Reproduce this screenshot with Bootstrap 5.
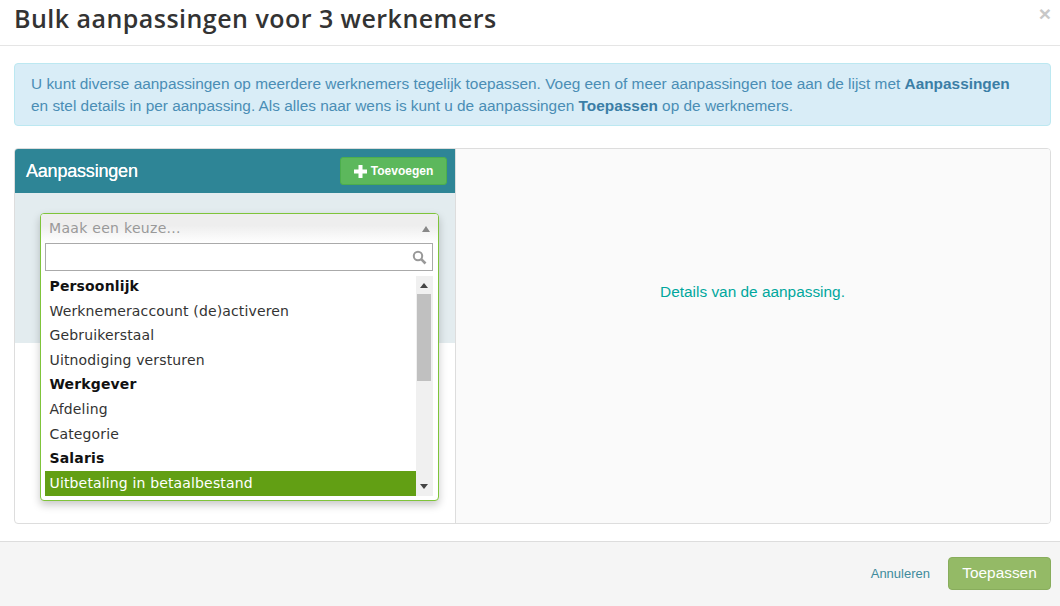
<!DOCTYPE html>
<html lang="en">
<head>
  <meta charset="UTF-8" />
  <title>Bulk aanpassingen</title>
  <link href="https://cdn.jsdelivr.net/npm/bootstrap@5.3.3/dist/css/bootstrap.min.css" rel="stylesheet" />
  <style>
    html, body { height: 100%; overflow: hidden; }
    body { font-family: "Liberation Sans", Arial, sans-serif; font-size: 14px; color: #333; background: #fff; }
    .dlg-head { height: 46px; border-bottom: 1px solid #e5e5e5; padding: 0 9px 0 14px; }
    .dlg-title { font-family: "Open Sans", sans-serif; font-weight: 600; font-size: 25px; letter-spacing: .47px; line-height: 37px; color: #333; margin: 0; }
    .dlg-close { font-family: "Liberation Sans", sans-serif; font-weight: 700; font-size: 21px; line-height: 1; color: #c8c8c8; margin-top: 3px; }
    .dlg-body { padding: 17px 9px 0 14px; height: 495px; }
    .info-box { background: #d9edf7; border: 1px solid #bce8f1; border-radius: 4px; color: #4a8db5; padding: 9px 16px; font-size: 15.4px; line-height: 22px; height: 63px; margin-bottom: 22px; }
    .info-box b { color: #3b7ea6; }
    .edit-panel { border: 1px solid #ddd; border-radius: 4px; height: 376px; overflow: visible; }
    .left-side { width: 441px; position: relative; border-right: 1px solid #ddd; flex: none; }
    .left-head { background: #2e8596; height: 44px; padding: 0 8px 0 11px; border-radius: 3px 0 0 0; }
    .left-title { color: #fff; font-size: 18px; letter-spacing: -.2px; text-shadow: 0 0 .6px #fff; }
    .add-btn { background: #5cb85c; border: 1px solid #4cae4c; border-radius: 3px; color: #fff; font-size: 12px; font-weight: 700; height: 28px; width: 107px; padding: 0; }
    .left-tint { background: #e3ecef; height: 150px; }
    .right-side { background: #fafafa; color: #00a79d; font-size: 15.4px; padding-top: 131px; padding-right: 1px; border-radius: 0 3px 3px 0; }
    .pick-box { position: absolute; left: 25px; top: 64px; width: 399px; height: 288px; background: #fff; border: 1px solid #7fc43a; border-radius: 4px; box-shadow: 0 4px 8px rgba(0,0,0,.22); font-family: "DejaVu Sans", Verdana, sans-serif; font-size: 14px; padding: 0 5px 0 4px; z-index: 5; }
    .pick-top { height: 29px; margin: 0 -5px 0 -4px; padding: 0 8px 0 8px; border-radius: 3px 3px 0 0; background: linear-gradient(#eee 40%, #fff); color: #999; }
    .pick-top span:first-child { letter-spacing: .3px; }
    .pick-arrow { width: 0; height: 0; border-left: 4px solid transparent; border-right: 4px solid transparent; border-bottom: 6px solid #888; }
    .pick-search { height: 28px; border: 1px solid #aaa; padding-right: 5px; }
    .pick-scroll { height: 220px; margin-top: 5px; overflow: hidden; }
    .pick-list { list-style: none; margin: -2px 0 0; padding: 0; flex: 1; }
    .pick-list li { height: 24.6px; line-height: 24.6px; padding-left: 4.5px; color: #333; letter-spacing: .15px; }
    .pick-list li.grp { font-weight: 700; color: #111; }
    .pick-list li.sel { background: #629f14; color: #fff; height: 25px; }
    .fake-bar { width: 17px; background: #f0f0f0; position: relative; flex: none; }
    .bar-thumb { position: absolute; left: 1px; right: 2px; top: 18px; height: 87px; background: #c0c0c0; }
    .bar-up, .bar-down { position: absolute; left: 4px; width: 0; height: 0; border-left: 4px solid transparent; border-right: 4px solid transparent; }
    .bar-up { top: 7px; border-bottom: 5px solid #444; }
    .bar-down { bottom: 7px; border-top: 5px solid #444; }
    .dlg-foot { background: #f5f5f5; border-top: 1px solid #ddd; height: 65px; padding: 15px 9px 0 0; }
    .cancel-link { color: #3f8b9c; font-size: 13px; text-decoration: none; margin: 7px 18px 0 0; }
    .apply-btn { background: #94ba66; border: 1px solid #88ad5c; border-radius: 4px; color: #fff; font-size: 15.4px; width: 103px; height: 33px; padding: 0 0 2px; }
  </style>
</head>
<body>
  <div class="dlg-head d-flex justify-content-between">
    <h4 class="dlg-title">Bulk aanpassingen voor 3 werknemers</h4>
    <span class="dlg-close">×</span>
  </div>
  <div class="dlg-body">
    <div class="info-box">
      U kunt diverse aanpassingen op meerdere werknemers tegelijk toepassen. Voeg een of meer aanpassingen toe aan de lijst met <b>Aanpassingen</b><br>
      en stel details in per aanpassing. Als alles naar wens is kunt u de aanpassingen <b>Toepassen</b> op de werknemers.
    </div>
    <div class="edit-panel d-flex">
      <div class="left-side">
        <div class="left-head d-flex justify-content-between align-items-center">
          <span class="left-title">Aanpassingen</span>
          <button class="add-btn d-flex align-items-center justify-content-center gap-1" type="button">
            <svg width="13" height="13" viewBox="0 0 13 13"><path d="M4.5 0h4v4.5H13v4H8.5V13h-4V8.5H0v-4h4.5z" fill="#fff"/></svg>
            Toevoegen
          </button>
        </div>
        <div class="left-tint"></div>
        <div class="pick-box">
          <div class="pick-top d-flex justify-content-between align-items-center">
            <span>Maak een keuze...</span>
            <span class="pick-arrow"></span>
          </div>
          <div class="pick-search d-flex justify-content-end align-items-center">
            <svg width="15" height="15" viewBox="0 0 15 15"><circle cx="6" cy="6" r="4.2" fill="none" stroke="#999" stroke-width="2"/><path d="M9.2 9.2 13.5 13.5" stroke="#999" stroke-width="2.6"/></svg>
          </div>
          <div class="pick-scroll d-flex">
            <ul class="pick-list">
              <li class="grp">Persoonlijk</li>
              <li>Werknemeraccount (de)activeren</li>
              <li>Gebruikerstaal</li>
              <li>Uitnodiging versturen</li>
              <li class="grp">Werkgever</li>
              <li>Afdeling</li>
              <li>Categorie</li>
              <li class="grp">Salaris</li>
              <li class="sel">Uitbetaling in betaalbestand</li>
            </ul>
            <div class="fake-bar">
              <span class="bar-up"></span>
              <span class="bar-thumb"></span>
              <span class="bar-down"></span>
            </div>
          </div>
        </div>
      </div>
      <div class="right-side flex-grow-1 text-center">Details van de aanpassing.</div>
    </div>
  </div>
  <div class="dlg-foot d-flex justify-content-end align-items-start">
    <a class="cancel-link" href="#">Annuleren</a>
    <button class="apply-btn" type="button">Toepassen</button>
  </div>
  <script src="https://cdn.jsdelivr.net/npm/bootstrap@5.3.3/dist/js/bootstrap.bundle.min.js"></script>
</body>
</html>
